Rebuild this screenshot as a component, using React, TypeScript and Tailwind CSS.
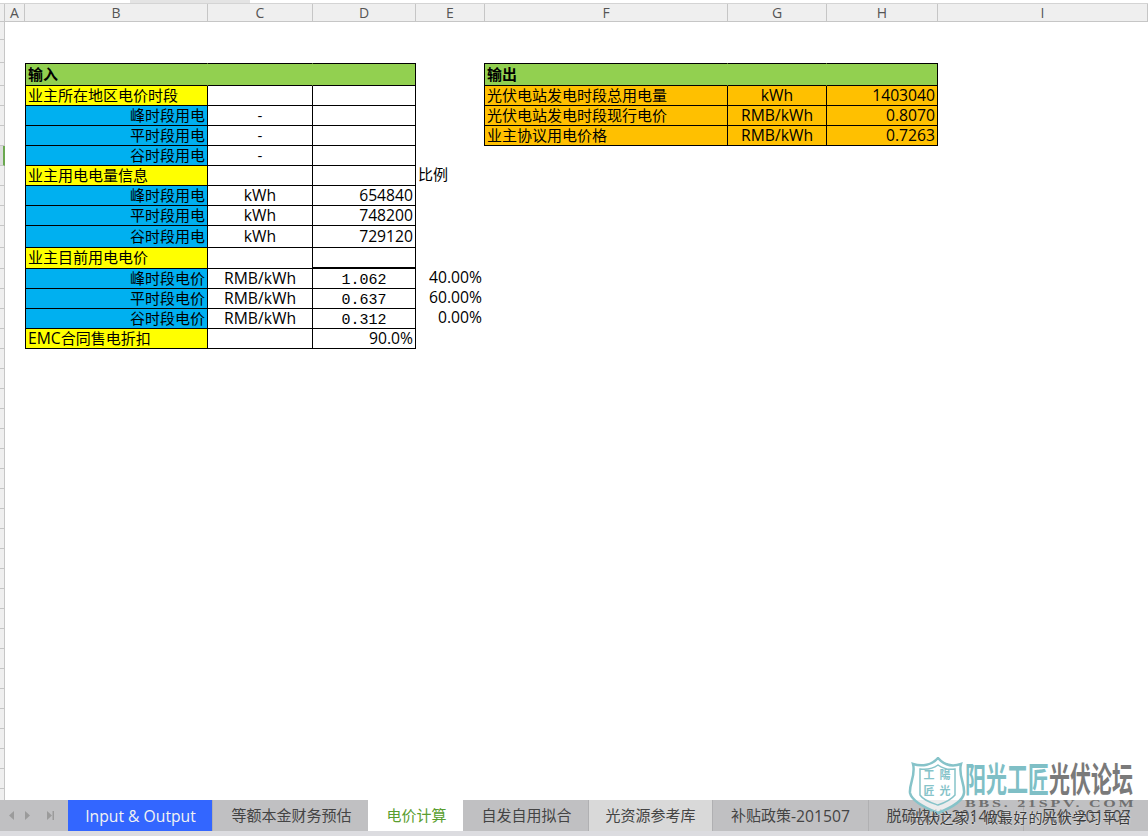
import React from 'react';

const columns = ['A', 'B', 'C', 'D', 'E', 'F', 'G', 'H', 'I'];

const Latin: React.FC<{ children: React.ReactNode }> = ({ children }) => <span className="inline-block pt-[2px] text-[15.7px]">{children}</span>;

const tabs = [
  { key: 'input', label: <Latin>Input &amp; Output</Latin>, className: 'w-[144px] pl-[1px] bg-[#3366ff] text-[#f2f2f2]' },
  { key: 'loan', label: '等额本金财务预估', className: 'w-[156px] pl-[2px] bg-[#c0c0c2] text-[#444444] border-l border-[#b0b0b2]' },
  { key: 'price', label: '电价计算', className: 'w-[95px] pl-[2px] bg-white text-[#5a9e2f]' },
  { key: 'self', label: '自发自用拟合', className: 'w-[125px] pl-[2px] bg-[#c0c0c2] text-[#444444]' },
  { key: 'solar', label: '光资源参考库', className: 'w-[124px] bg-[#d9d9d9] text-[#444444] border-l border-[#b0b0b2]' },
  { key: 'subsidy', label: <>补贴政策<Latin>-201507</Latin></>, className: 'w-[156px] bg-[#c0c0c2] text-[#444444] border-l border-[#b0b0b2]' },
  { key: 'coal', label: <>脱硫煤价<Latin>-201409</Latin></>, className: 'w-[155px] bg-[#c0c0c2] text-[#444444] border-l border-[#b0b0b2]' },
  { key: 'wind', label: <>风价<Latin>-201507</Latin></>, className: 'w-[125px] bg-[#c0c0c2] text-[#444444] border-l border-[#b0b0b2]' },
];

const box = 'flex items-center whitespace-nowrap border-r border-b border-black px-[2px] pb-[1px] text-[15px] leading-none text-black';
const yellow = `${box} border-l bg-[#ffff00]`;
const blue = `${box} border-l bg-[#00b0f0] justify-end`;
const white = `${box} bg-white`;
const center = `${white} justify-center`;
const right = `${white} justify-end`;
const simsun = `${center} font-['Liberation_Mono',monospace] text-[13px] pt-[4px] text-[#333333]`;
const orange = `${box} bg-[#ffc000]`;
const plain = 'flex items-center whitespace-nowrap pb-[3px] text-[15px] leading-none text-black';
const percent = `${plain} justify-end pr-[3px] pb-[5px]`;
const green = 'flex items-center border-t border-b border-r border-black bg-[#92d050] px-[2px] text-[15px] font-bold leading-none text-black';
const greenOpen = `${green} border-r-[#92d050]`;

type Cell = { text?: React.ReactNode; className?: string };
type Row = { inputs: Cell[]; e?: Cell; outputs?: Cell[] };

const rows: Row[] = [
  {
    inputs: [{ text: '输入', className: `${greenOpen} border-l` }, { className: greenOpen }, { className: green }],
    outputs: [{ text: '输出', className: `${greenOpen} border-l -ml-px` }, { className: greenOpen }, { className: green }],
  },
  {
    inputs: [{ text: '业主所在地区电价时段', className: yellow }, { className: center }, { className: right }],
    outputs: [
      { text: '光伏电站发电时段总用电量', className: `${orange} border-l -ml-px` },
      { text: <Latin>kWh</Latin>, className: `${orange} justify-center` },
      { text: <Latin>1403040</Latin>, className: `${orange} justify-end` },
    ],
  },
  {
    inputs: [{ text: '峰时段用电', className: blue }, { text: '-', className: center }, { className: right }],
    outputs: [
      { text: '光伏电站发电时段现行电价', className: `${orange} border-l -ml-px` },
      { text: <Latin>RMB/kWh</Latin>, className: `${orange} justify-center` },
      { text: <Latin>0.8070</Latin>, className: `${orange} justify-end` },
    ],
  },
  {
    inputs: [{ text: '平时段用电', className: blue }, { text: '-', className: center }, { className: right }],
    outputs: [
      { text: '业主协议用电价格', className: `${orange} border-l -ml-px` },
      { text: <Latin>RMB/kWh</Latin>, className: `${orange} justify-center` },
      { text: <Latin>0.7263</Latin>, className: `${orange} justify-end` },
    ],
  },
  { inputs: [{ text: '谷时段用电', className: blue }, { text: '-', className: center }, { className: right }] },
  {
    inputs: [{ text: '业主用电电量信息', className: yellow }, { className: center }, { className: right }],
    e: { text: '比例', className: `${plain} pl-[2px] text-[#1f3864]` },
  },
  { inputs: [{ text: '峰时段用电', className: blue }, { text: <Latin>kWh</Latin>, className: center }, { text: <Latin>654840</Latin>, className: right }] },
  { inputs: [{ text: '平时段用电', className: blue }, { text: <Latin>kWh</Latin>, className: center }, { text: <Latin>748200</Latin>, className: right }] },
  { inputs: [{ text: '谷时段用电', className: blue }, { text: <Latin>kWh</Latin>, className: center }, { text: <Latin>729120</Latin>, className: right }] },
  { inputs: [{ text: '业主目前用电电价', className: yellow }, { className: center }, { className: `${right} border-b-2` }] },
  {
    inputs: [{ text: '峰时段电价', className: blue }, { text: <Latin>RMB/kWh</Latin>, className: center }, { text: '1.062', className: simsun }],
    e: { text: <Latin>40.00%</Latin>, className: percent },
  },
  {
    inputs: [{ text: '平时段电价', className: blue }, { text: <Latin>RMB/kWh</Latin>, className: center }, { text: '0.637', className: simsun }],
    e: { text: <Latin>60.00%</Latin>, className: percent },
  },
  {
    inputs: [{ text: '谷时段电价', className: blue }, { text: <Latin>RMB/kWh</Latin>, className: center }, { text: '0.312', className: simsun }],
    e: { text: <Latin>0.00%</Latin>, className: percent },
  },
  { inputs: [{ text: <><Latin>EMC</Latin>合同售电折扣</>, className: yellow }, { className: center }, { text: <Latin>90.0%</Latin>, className: right }] },
];

const RowHead: React.FC<{ active?: boolean }> = ({ active }) => (
  <div className={`border-r border-b border-[#c6c6c6] ${active ? 'bg-[#dcdcdc] border-r-2 border-r-[#6aa84f]' : 'bg-[#efefef]'}`} />
);

const Watermark: React.FC = () => (
  <div className="absolute left-[908px] top-[757px] h-[72px] w-[232px] pointer-events-none">
    <svg className="absolute left-0 top-0" width="58" height="60" viewBox="0 0 58 60" fill="none">
      <path
        d="M30 1 C24 8 14 10 5 7 C8 18 1 27 2 36 C4 45 20 52 30 56 C40 52 55 45 56 36 C57 27 50 18 53 7 C44 10 36 8 30 1 Z"
        stroke="#86c3c9"
        strokeWidth="2.5"
        fill="#ffffff"
        fillOpacity="0.7"
      />
      <path d="M12 12 C20 13 26 11 30 8 C34 11 40 13 47 12 L47 38 C42 44 36 46 30 48 C24 46 16 44 12 38 Z" stroke="#86c3c9" strokeWidth="1.5" />
    </svg>
    <div className="absolute left-[13px] top-[11px] grid w-[32px] grid-cols-2 gap-y-[3px] text-center font-['Noto_Sans_CJK_TC',serif] text-[11px] font-bold leading-[13px] text-[#86c3c9]">
      <span>工</span>
      <span>陽</span>
      <span>匠</span>
      <span>光</span>
    </div>
    <div className="absolute left-[57px] top-[4px] flex h-[32px] origin-top scale-y-[1.65] items-start font-['Noto_Sans_CJK_SC',sans-serif] text-[21px] font-bold leading-[21px]">
      <span className="text-[#7fbfc6]">阳光工匠</span>
      <span className="text-[#7a7a7a]">光伏论坛</span>
    </div>
    <div className="absolute left-[57px] top-[42px] origin-left scale-x-[1.6] whitespace-nowrap font-['Liberation_Serif',serif] text-[10px] font-bold leading-none tracking-[1.75px] text-[#707070]">
      BBS. 21SPV. COM
    </div>
    <div className="absolute left-[2px] top-[52px] whitespace-nowrap font-['Noto_Sans_CJK_SC',sans-serif] text-[14px] leading-[16px] tracking-[0.8px] text-[#3a3a3a] [text-shadow:0_0_2px_#ffffff]">
      光伏之家：做最好的光伏学习平台
    </div>
  </div>
);

const App: React.FC = () => {
  return (
    <div className="relative flex h-[836px] w-[1148px] flex-col overflow-hidden bg-white font-['Open_Sans','Noto_Sans_CJK_SC',sans-serif]">
      {/* formula bar edge */}
      <div className="flex h-[4px] shrink-0 border-b border-[#d4d4d4] bg-white">
        <div className="ml-[130px] w-[120px] bg-[#e4e4e4]" />
      </div>

      <div className="grid min-h-0 flex-1 grid-cols-[5px_20px_183px_105px_103px_69px_243px_99px_111px_1fr] grid-rows-[18px_18px_23px_23px_20px_20px_20px_20px_20px_20px_20px_22px_21px_20px_20px_20px_20px] auto-rows-[20px] overflow-hidden">
        {/* column headers */}
        <div className="border-r border-b border-[#c6c6c6] bg-[#efefef]" />
        {columns.map(c => (
          <div key={c} className="flex items-center justify-center border-r border-b border-[#c6c6c6] bg-[#efefef] text-[14px] leading-none text-[#555555]">
            {c}
          </div>
        ))}

        {/* rows 1 and 2 are empty */}
        <RowHead />
        <div className="col-span-9" />
        <RowHead />
        <div className="col-span-9" />

        {rows.map((row, i) => (
          <React.Fragment key={i}>
            <RowHead active={i === 4} />
            <div />
            {row.inputs.map((cell, j) => (
              <div key={j} className={cell.className}>
                {cell.text}
              </div>
            ))}
            <div className={row.e?.className}>{row.e?.text}</div>
            {row.outputs ? (
              row.outputs.map((cell, j) => (
                <div key={j} className={cell.className}>
                  {cell.text}
                </div>
              ))
            ) : (
              <div className="col-span-3" />
            )}
            <div />
          </React.Fragment>
        ))}

        {Array.from({ length: 24 }).map((_, i) => (
          <React.Fragment key={i}>
            <RowHead />
            <div className="col-span-9" />
          </React.Fragment>
        ))}
      </div>

      {/* sheet tabs */}
      <div className="flex h-[31px] shrink-0 overflow-hidden bg-[#c0c0c2]">
        <div className="flex w-[68px] shrink-0 items-center">
          <svg width="68" height="31" viewBox="0 0 68 31" fill="#9b9b9b">
            <path d="M9 15.5 L14 11 V20 Z" />
            <path d="M30 15.5 L25 11 V20 Z" />
            <path d="M52 15.5 L47 11 V20 Z" />
            <rect x="52.5" y="11" width="1.5" height="9" />
          </svg>
        </div>
        {tabs.map(t => (
          <div key={t.key} className={`flex shrink-0 items-center justify-center whitespace-nowrap text-[15px] leading-none ${t.className}`}>
            {t.label}
          </div>
        ))}
      </div>
      <div className="h-[5px] shrink-0 bg-[#dcdce0]" />

      <Watermark />
    </div>
  );
};

export default App;
